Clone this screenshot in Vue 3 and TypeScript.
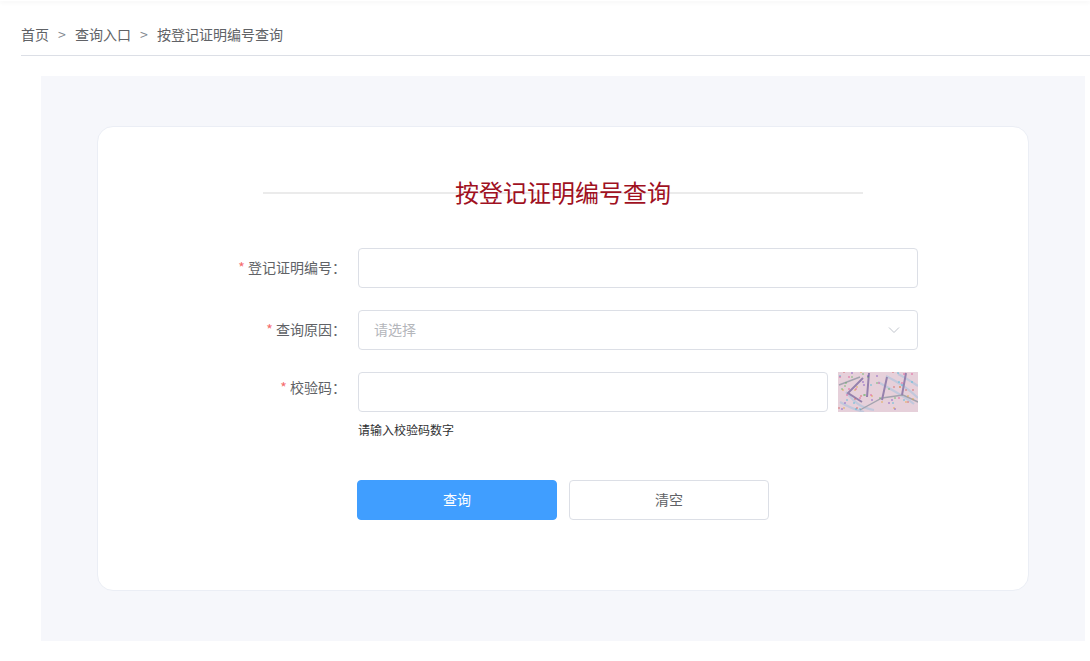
<template>
  <div class="page">
    <div class="topbar"></div>
    <div class="crumbs">
      <span>首页</span><i>&gt;</i><span>查询入口</span><i>&gt;</i><span>按登记证明编号查询</span>
    </div>
    <div class="panel">
      <div class="card">
        <div class="title"><span>按登记证明编号查询</span></div>
        <form class="form" @submit.prevent>
          <div class="row">
            <label><em>*</em> 登记证明编号：</label>
            <input v-model="certNo" class="input" type="text" />
          </div>
          <div class="row">
            <label><em>*</em> 查询原因：</label>
            <div class="select">
              <span>请选择</span>
              <svg width="12" height="12" viewBox="0 0 12 12">
                <path d="M1 3.5 L6 8.5 L11 3.5" fill="none" stroke="#c0c4cc" stroke-width="1" />
              </svg>
            </div>
          </div>
          <div class="row captcha-row">
            <label><em>*</em> 校验码：</label>
            <div class="captcha-box">
              <input v-model="code" class="input" type="text" />
              <svg class="captcha" width="80" height="40" viewBox="0 0 80 40">
                <rect width="80" height="40" fill="#e6d0da" />
                <g class="soft">
                  <path d="M8 20 C18 32 24 36 36 38 M2 30 C12 36 18 38 26 40 M48 4 C60 10 72 18 80 26 M40 10 C54 18 66 24 76 32 M60 2 C68 6 74 10 80 14" fill="none" stroke="#c2c8dc" stroke-width="2.2" />
                  <path d="M1 13 L22 5 M22 38 L44 26 L65 23 L80 30" fill="none" stroke="#a3a3ae" stroke-width="1.4" />
                  <path d="M25 6 L10 21 L24 30 M31 1 L29 25 M49 5 L44 28 M68 1 L64 23" fill="none" stroke="#9581ad" stroke-width="2" />
                  <circle v-for="d in dots" :key="d.id" :cx="d.x" :cy="d.y" r="0.7" :fill="d.color" />
                </g>
              </svg>
            </div>
          </div>
          <p class="hint">请输入校验码数字</p>
          <div class="actions">
            <button class="btn primary" type="submit">查询</button>
            <button class="btn" type="button" @click="clear">清空</button>
          </div>
        </form>
      </div>
    </div>
  </div>
</template>

<script setup lang="ts">
import { ref } from 'vue'

const certNo = ref('')
const code = ref('')

const colors = ['#e0408a', '#35b8d8', '#e0a030', '#58b058', '#7040c0', '#d05050']
// scattered noise for the captcha image
const dots = Array.from({ length: 70 }, (_, i) => ({
  id: i,
  x: (i * i * 7 + i * 37 + 11) % 79,
  y: (i * i * 3 + i * 23 + 5) % 39,
  color: colors[i % colors.length],
}))

function clear() {
  certNo.value = ''
  code.value = ''
}
</script>

<style>
body {
  background: #fff;
}
</style>

<style scoped>
.page {
  height: 661px;
  overflow: hidden;
  font-family: "Noto Sans CJK SC", "Liberation Sans", sans-serif;
  font-size: 14px;
  color: #606266;
}

.topbar {
  height: 1px;
  box-shadow: 0 1px 4px rgba(0, 0, 0, 0.12);
}

.crumbs {
  margin-left: 21px;
  height: 55px;
  box-sizing: border-box;
  padding-top: 12px;
  display: flex;
  align-items: center;
  border-bottom: 1px solid #dcdfe6;
}

.crumbs i {
  font-style: normal;
  color: #82868e;
  width: 26px;
  text-align: center;
}

.panel {
  margin: 20px 5px 0 41px;
  height: 565px;
  box-sizing: border-box;
  padding: 50px 56px 0 56px;
  background: #f6f7fb;
}

.card {
  height: 465px;
  box-sizing: border-box;
  padding-top: 49px;
  background: #fff;
  border: 1px solid #ebeef5;
  border-radius: 16px;
}

.title {
  width: 600px;
  margin-left: 165px;
  height: 34px;
  text-align: center;
  background: linear-gradient(#ebebeb, #ebebeb) center 16px / 100% 2px no-repeat;
  font-size: 24px;
  line-height: 32px;
  color: #a0111f;
}

.form {
  width: 720px;
  margin: 38px 0 0 100px;
}

.row {
  display: flex;
  align-items: center;
  height: 40px;
  margin-bottom: 22px;
}

.row label {
  width: 160px;
  box-sizing: border-box;
  padding: 0 12px 2px 0;
  text-align: right;
  flex: none;
}

.row label em {
  font-style: normal;
  color: #f56c6c;
}

.input,
.select {
  flex: 1;
  min-width: 0;
  height: 40px;
  box-sizing: border-box;
  border: 1px solid #dcdfe6;
  border-radius: 4px;
  background: #fff;
  outline: none;
  padding: 0 15px;
  font-size: 14px;
  color: #606266;
}

.select {
  display: flex;
  align-items: center;
  justify-content: space-between;
  color: #b4b6bb;
}

.select span {
  padding-bottom: 2px;
}

.select svg {
  margin-right: 2px;
}

.captcha-row {
  margin-bottom: 8px;
}

.captcha-row label {
  align-self: flex-start;
  line-height: 30px;
}

.captcha-box {
  flex: 1;
  display: flex;
  gap: 10px;
}

.captcha {
  display: block;
  flex: none;
}

.soft {
  filter: blur(0.4px);
}

.hint {
  margin: 0 0 2px 160px;
  font-size: 12px;
  line-height: 20px;
  color: #303133;
}

.actions {
  display: flex;
  gap: 12px;
  margin: 40px 0 0 159px;
}

.btn {
  width: 200px;
  height: 40px;
  padding: 0 0 2px;
  font-family: inherit;
  font-size: 14px;
  color: #606266;
  background: #fff;
  border: 1px solid #dcdfe6;
  border-radius: 4px;
  cursor: pointer;
}

.btn.primary {
  color: #fff;
  background: #409eff;
  border-color: #409eff;
}
</style>
